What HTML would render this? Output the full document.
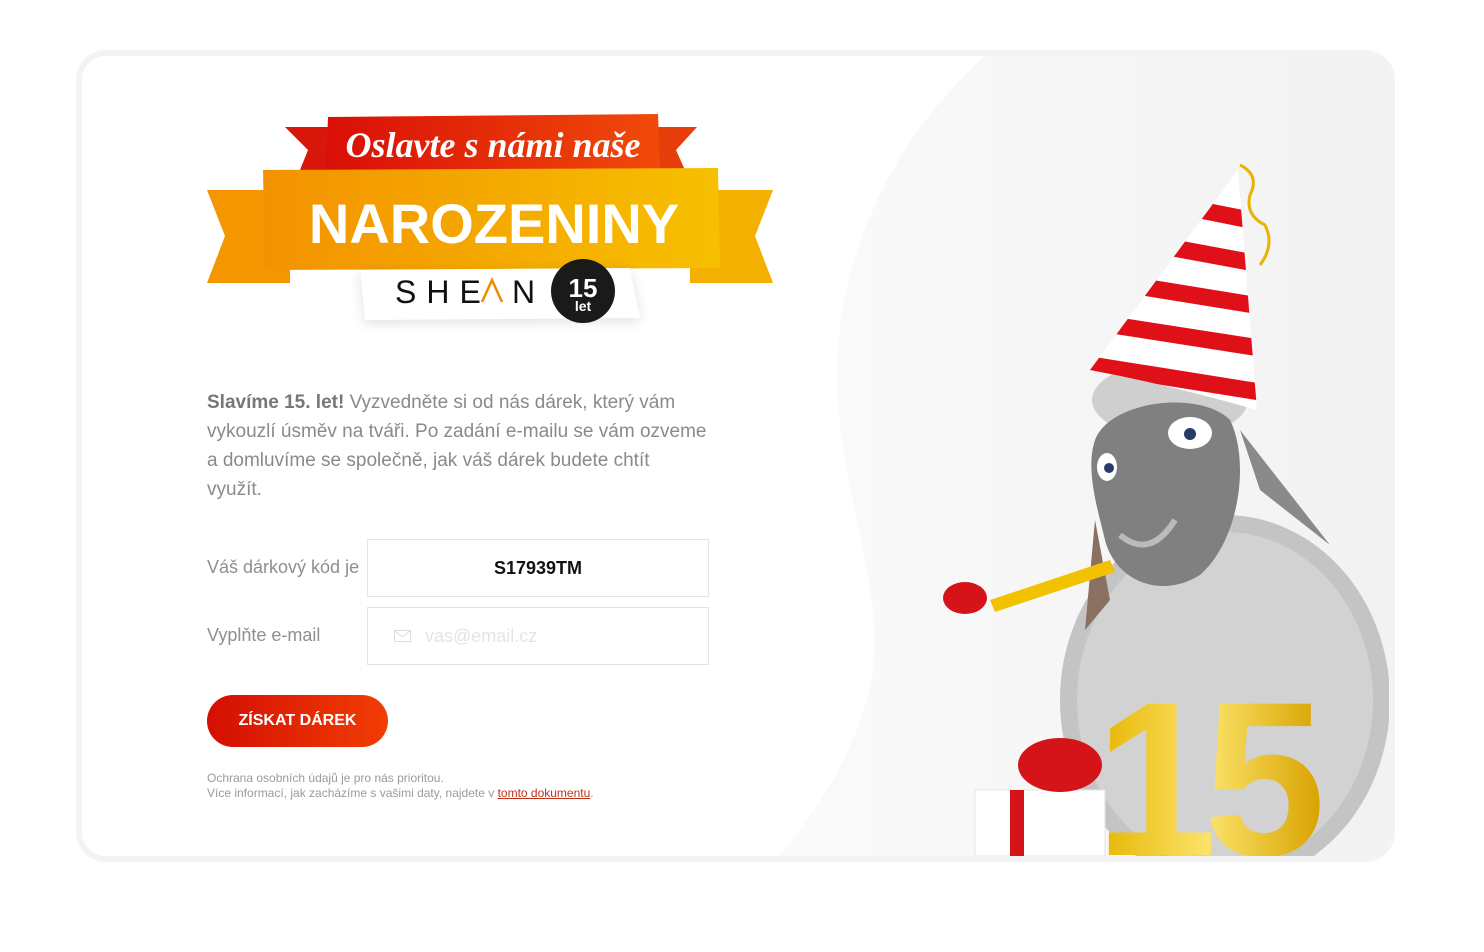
<!DOCTYPE html>
<html><head><meta charset="utf-8"><style>
*{margin:0;padding:0;box-sizing:border-box}
body{width:1484px;height:952px;background:#fff;font-family:"Liberation Sans",sans-serif;position:relative;overflow:hidden}
.card{position:absolute;left:76px;top:50px;width:1319px;height:812px;border:6px solid #f3f3f3;border-radius:30px;background:#fff;overflow:hidden}
.p{position:absolute;left:207px;top:388px;width:500px;font-size:19px;line-height:29px;color:#8a8a8a}
.p b{color:#777}
.lab{position:absolute;left:207px;font-size:18px;color:#8f8f8f}
.box{position:absolute;left:367px;width:342px;height:58px;border:1px solid #e3e3e3;background:#fff}
.btn{position:absolute;left:207px;top:695px;width:181px;height:52px;border-radius:26px;background:linear-gradient(90deg,#d30f03,#f23d05);color:#fff;font-weight:bold;font-size:16px;text-align:center;line-height:52px}
.small{position:absolute;left:207px;top:771px;font-size:12px;line-height:14.5px;color:#9a9a9a}
.small a{color:#c0311a;text-decoration:underline}
svg text{font-family:"Liberation Sans",sans-serif}
</style></head><body>
<div class="card"></div>
<svg style="position:absolute;left:0;top:0" width="1484" height="952">
<defs>
<linearGradient id="bg" x1="0" x2="1"><stop offset="0" stop-color="#fafafa"/><stop offset="1" stop-color="#f2f2f2"/></linearGradient>
<linearGradient id="org" x1="0" x2="1"><stop offset="0" stop-color="#f39200"/><stop offset="1" stop-color="#f6c000"/></linearGradient>
<linearGradient id="red" x1="0" x2="1"><stop offset="0" stop-color="#d90f07"/><stop offset="1" stop-color="#f04a0a"/></linearGradient>
<linearGradient id="gold" x1="0" x2="1"><stop offset="0" stop-color="#e7b400"/><stop offset=".5" stop-color="#fbe36a"/><stop offset="1" stop-color="#d9a300"/></linearGradient>
<clipPath id="cc"><rect x="82" y="56" width="1307" height="800" rx="24"/></clipPath>
<clipPath id="hat"><path d="M1238 170 L1090 370 Q1170 385 1257 410Z"/></clipPath>
</defs>
<g clip-path="url(#cc)">
<path d="M985 56 C880 150 830 280 838 400 C845 520 900 620 860 720 C840 780 800 830 780 856 L1389 856 L1389 56Z" fill="url(#bg)"/>
<ellipse cx="1225" cy="700" rx="165" ry="185" fill="#c4c4c4"/>
<ellipse cx="1225" cy="700" rx="148" ry="168" fill="#d2d2d2"/>
<path d="M1240 430 L1330 545 L1260 490Z" fill="#8a8a8a"/>
<path d="M1095 520 L1085 630 L1110 600Z" fill="#8a7060"/>
<ellipse cx="1170" cy="400" rx="78" ry="38" fill="#cfcfcf"/>
<path d="M1095 440 C1110 400 1200 390 1230 420 C1250 460 1240 540 1200 575 C1160 600 1115 580 1105 540 C1098 510 1085 470 1095 440Z" fill="#808080"/>
<ellipse cx="1190" cy="433" rx="22" ry="16" fill="#fff"/><circle cx="1190" cy="434" r="6" fill="#2a3a6a"/>
<ellipse cx="1107" cy="467" rx="10" ry="14" fill="#fff"/><circle cx="1109" cy="468" r="5" fill="#2a3a6a"/>
<path d="M1120 535 Q1150 560 1175 520" stroke="#bbb" stroke-width="6" fill="none"/>
<path d="M990 600 L1110 560 L1115 572 L995 612Z" fill="#f2c200"/>
<ellipse cx="965" cy="598" rx="22" ry="16" fill="#d5141a"/>
<path d="M1238 170 L1090 370 Q1170 385 1257 410Z" fill="#fff"/>
<g clip-path="url(#hat)" stroke="#e01018" stroke-width="17">
<line x1="1150" y1="200" x2="1260" y2="222"/><line x1="1130" y1="240" x2="1260" y2="264"/>
<line x1="1100" y1="280" x2="1260" y2="306"/><line x1="1080" y1="320" x2="1260" y2="348"/><line x1="1060" y1="360" x2="1260" y2="392"/>
</g>
<path d="M1240 165 q20 10 10 30 q-5 20 15 30 q10 20 -5 40" stroke="#e7b400" stroke-width="3" fill="none"/>
<rect x="975" y="790" width="130" height="66" fill="#fff" stroke="#e4e4e4"/>
<rect x="1010" y="790" width="14" height="66" fill="#d5141a"/>
<ellipse cx="1060" cy="765" rx="42" ry="27" fill="#d5141a"/>
<text x="1095" y="855" font-weight="bold" font-size="220" fill="url(#gold)" letter-spacing="-14">15</text>
</g>
<path d="M285 127 L355 127 L355 170 L300 170 L308 150Z" fill="#d8170a"/>
<path d="M697 127 L630 127 L630 170 L685 170 L676 150Z" fill="#e63d0a"/>
<path d="M328 117 L658 114 L660 170 L326 172Z" fill="url(#red)"/>
<path d="M207 190 L290 190 L290 283 L207 283 L225 236Z" fill="#f39600"/>
<path d="M773 190 L690 190 L690 283 L773 283 L755 236Z" fill="#f4b000"/>
<path d="M263 170 L718 168 L720 268 L265 270Z" fill="url(#org)"/>
<path d="M360 270 L630 268 L640 318 L365 320Z" fill="#fff" style="filter:drop-shadow(0 3px 6px rgba(0,0,0,.12))"/>
<text x="493" y="157" text-anchor="middle" style="font-family:'Liberation Serif',serif" font-style="italic" font-weight="bold" font-size="36" fill="#fff">Oslavte s námi naše</text>
<text x="494" y="243" text-anchor="middle" font-weight="bold" font-size="56" fill="#fff">NAROZENINY</text>
<text x="395" y="303" font-size="32" letter-spacing="10" fill="#111">SHE</text>
<path d="M482 302 L492 280 L502 302" stroke="#f08a00" stroke-width="2.5" fill="none"/>
<text x="512" y="303" font-size="32" fill="#111">N</text>
<circle cx="583" cy="291" r="32" fill="#1a1a1a"/>
<text x="583" y="297" text-anchor="middle" font-weight="bold" font-size="26" fill="#fff">15</text>
<text x="583" y="311" text-anchor="middle" font-weight="bold" font-size="14" fill="#fff">let</text>
</svg>
<div class="p"><b>Slavíme 15. let!</b> Vyzvedněte si od nás dárek, který vám vykouzlí úsměv na tváři. Po zadání e-mailu se vám ozveme a domluvíme se společně, jak váš dárek budete chtít využít.</div>
<div class="lab" style="top:557px">Váš dárkový kód je</div>
<div class="box" style="top:539px;text-align:center;line-height:56px;font-weight:bold;font-size:18px;color:#111">S17939TM</div>
<div class="lab" style="top:625px">Vyplňte e-mail</div>
<div class="box" style="top:607px;line-height:56px;font-size:18px;color:#e4e4e4;padding-left:57px">vas@email.cz
<svg style="position:absolute;left:26px;top:22px" width="17" height="12"><rect x=".5" y=".5" width="16" height="11" fill="none" stroke="#ddd"/><path d="M.5 .5 L8.5 7 L16.5 .5" fill="none" stroke="#ddd"/></svg></div>
<div class="btn">ZÍSKAT DÁREK</div>
<div class="small">Ochrana osobních údajů je pro nás prioritou.<br>Více informací, jak zacházíme s vašimi daty, najdete v <a>tomto dokumentu</a>.</div>
</body></html>
